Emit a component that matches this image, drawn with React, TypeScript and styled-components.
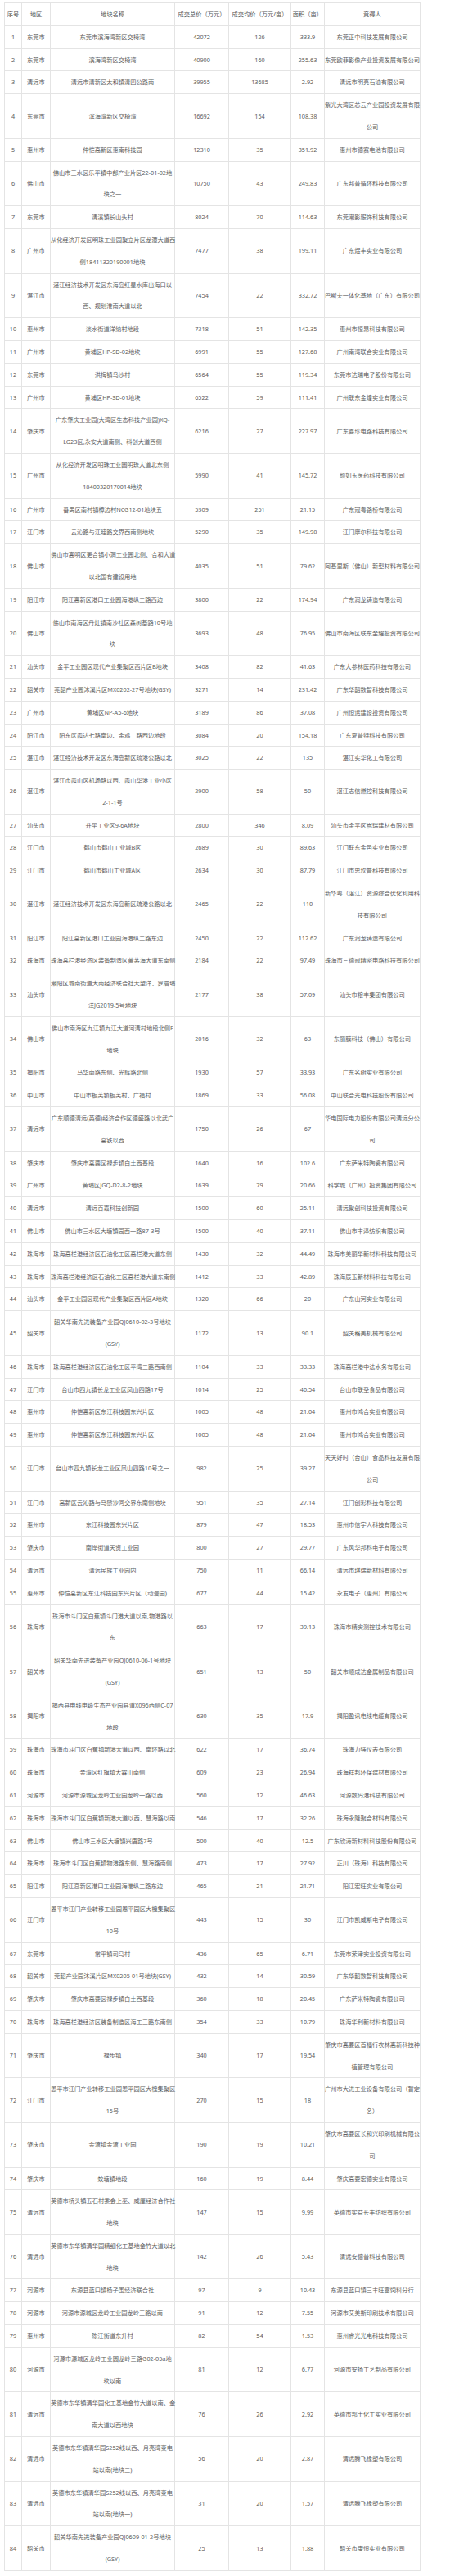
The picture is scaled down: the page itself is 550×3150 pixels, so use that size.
import React from "react";
import styled, { createGlobalStyle } from "styled-components";

const GlobalStyle = createGlobalStyle`
  html, body { margin: 0; padding: 0; background: #ffffff; }
  body { font-family: "Noto Sans CJK SC", "Noto Sans", sans-serif; }
`;

const Page = styled.div`
  padding: 3px 0 0 5px;
  width: 550px;
  box-sizing: border-box;
`;

const Table = styled.table`
  width: 508px;
  table-layout: fixed;
  border-collapse: collapse;
  color: #5c5c5c;
  font-family: "Noto Sans", "Noto Sans CJK SC", sans-serif;
  font-size: 7.25px;
`;

const Cell = styled.td`
  border: 1px solid #e4e4e4;
  padding: 0;
  line-height: 26.8px;
  text-align: center;
  vertical-align: middle;
  white-space: pre;
  overflow: visible;
`;

const HeadCell = styled(Cell).attrs({ as: "th" })`
  font-weight: normal;
  color: #555555;
`;

type Row = [string, string, string, string, string, string];

const rows: Row[] = [
  ["东莞市", "东莞市滨海湾新区交椅湾", "42072", "126", "333.9", "东莞正中科技发展有限公司"],
  ["东莞市", "滨海湾新区交椅湾", "40900", "160", "255.63", "东莞欧菲影像产业投资发展有限公司"],
  ["清远市", "清远市清新区太和镇清四公路南", "39955", "13685", "2.92", "清远市明亮石油有限公司"],
  ["东莞市", "滨海湾新区交椅湾", "16692", "154", "108.38", "紫光大湾区芯云产业园投资发展有限\n公司"],
  ["惠州市", "仲恺高新区惠南科技园", "12310", "35", "351.92", "惠州市德赛电池有限公司"],
  ["佛山市", "佛山市三水区乐平镇中部产业片区22-01-02地\n块之一", "10750", "43", "249.83", "广东邦普循环科技有限公司"],
  ["东莞市", "清溪镇长山头村", "8024", "70", "114.63", "东莞潮影服饰科技有限公司"],
  ["广州市", "从化经济开发区明珠工业园聚立片区龙潭大道西\n侧18411320190001地块", "7477", "38", "199.11", "广东煜丰实业有限公司"],
  ["湛江市", "湛江经济技术开发区东海岛红星水库出海口以\n西、规划港南大道以北", "7454", "22", "332.72", "巴斯夫一体化基地（广东）有限公司"],
  ["惠州市", "淡水街道洋纳村地段", "7318", "51", "142.35", "惠州市恒昂科技有限公司"],
  ["广州市", "黄埔区HP-SD-02地块", "6991", "55", "127.68", "广州南湾联合实业有限公司"],
  ["东莞市", "洪梅镇乌沙村", "6564", "55", "119.34", "东莞市达瑞电子股份有限公司"],
  ["广州市", "黄埔区HP-SD-01地块", "6522", "59", "111.41", "广州联东金煌实业有限公司"],
  ["肇庆市", "广东肇庆工业园(大湾区生态科技产业园)XQ-\nLG23区,永安大道南侧、科创大道西侧", "6216", "27", "227.97", "广东喜珍电路科技有限公司"],
  ["广州市", "从化经济开发区明珠工业园明珠大道北东侧\n18400320170014地块", "5990", "41", "145.72", "颜如玉医药科技有限公司"],
  ["广州市", "番禺区南村镇樟边村NCG12-01地块五", "5309", "251", "21.15", "广东冠粤路桥有限公司"],
  ["江门市", "云沁路与江睦路交界西南侧地块", "5290", "35", "149.98", "江门摩尔科技有限公司"],
  ["佛山市", "佛山市高明区更合镇小洞工业园北侧、合和大道\n以北国有建设用地", "4035", "51", "79.62", "阿基里斯（佛山）新型材料有限公司"],
  ["阳江市", "阳江高新区港口工业园海港纵二路西边", "3800", "22", "174.94", "广东润龙铸造有限公司"],
  ["佛山市", "佛山市南海区丹灶镇南沙社区森树基路10号地\n块", "3693", "48", "76.95", "佛山市南海区联东金耀投资有限公司"],
  ["汕头市", "金平工业园区现代产业集聚区西片区B地块", "3408", "82", "41.63", "广东大参林医药科技有限公司"],
  ["韶关市", "莞韶产业园沐溪片区MX0202-27号地块(GSY)", "3271", "14", "231.42", "广东华韶数智科技有限公司"],
  ["广州市", "黄埔区NP-A5-6地块", "3189", "86", "37.08", "广州恒运建设投资有限公司"],
  ["阳江市", "阳东区霞达七路南边、金鸡二路西边地段", "3084", "20", "154.18", "广东夏普特科技有限公司"],
  ["湛江市", "湛江经济技术开发区东海岛新区疏港公路以北", "3025", "22", "135", "湛江实华化工有限公司"],
  ["湛江市", "湛江市霞山区机场路以西、霞山华港工业小区\n2-1-1号", "2900", "58", "50", "湛江志信燃控科技有限公司"],
  ["汕头市", "升平工业区9-6A地块", "2800", "346", "8.09", "汕头市金平区嵩瑞建材有限公司"],
  ["江门市", "鹤山市鹤山工业城B区", "2689", "30", "89.63", "江门联东金邑实业有限公司"],
  ["江门市", "鹤山市鹤山工业城A区", "2634", "30", "87.79", "江门市思坎普科技有限公司"],
  ["湛江市", "湛江经济技术开发区东海岛新区疏港公路以北", "2465", "22", "110", "新华粤（湛江）资源综合优化利用科\n技有限公司"],
  ["阳江市", "阳江高新区港口工业园海港纵二路东边", "2450", "22", "112.62", "广东润龙铸造有限公司"],
  ["珠海市", "珠海高栏港经济区装备制造区黄茅海大道东南侧", "2184", "22", "97.49", "珠海市三德冠精密电路科技有限公司"],
  ["汕头市", "潮阳区城南街道大南经济联合社大望洋、罗厝埔\n洋JG2019-5号地块", "2177", "38", "57.09", "汕头市粮丰集团有限公司"],
  ["佛山市", "佛山市南海区九江镇九江大道河清村地段北侧F\n地块", "2016", "32", "63", "东丽膜科技（佛山）有限公司"],
  ["揭阳市", "马华南路东侧、光辉路北侧", "1930", "57", "33.93", "广东名树实业有限公司"],
  ["中山市", "中山市板芙镇板芙村、广福村", "1869", "33", "56.08", "中山联合光电科技股份有限公司"],
  ["清远市", "广东顺德清远(英德)经济合作区德盛路以北武广\n高铁以西", "1750", "26", "67", "华电国际电力股份有限公司清远分公\n司"],
  ["肇庆市", "肇庆市高要区禄步镇白土西基段", "1640", "16", "102.6", "广东萨米特陶瓷有限公司"],
  ["广州市", "黄埔区JGQ-D2-8-2地块", "1639", "79", "20.66", "科学城（广州）投资集团有限公司"],
  ["清远市", "清远百嘉科技创新园", "1500", "60", "25.11", "清远聚创科技投资有限公司"],
  ["佛山市", "佛山市三水区大塘镇园西一路87-3号", "1500", "40", "37.11", "佛山市丰泽纺织有限公司"],
  ["珠海市", "珠海高栏港经济区石油化工区高栏港大道东侧", "1430", "32", "44.49", "珠海市美丽华新材料科技有限公司"],
  ["珠海市", "珠海高栏港经济区石油化工区高栏港大道东南侧", "1412", "33", "42.89", "珠海辰玉新材料科技有限公司"],
  ["汕头市", "金平工业园区现代产业集聚区西片区A地块", "1320", "66", "20", "广东山河实业有限公司"],
  ["韶关市", "韶关华南先进装备产业园QJ0610-02-3号地块\n(GSY)", "1172", "13", "90.1", "韶关格美机械有限公司"],
  ["珠海市", "珠海高栏港经济区石油化工区平湾二路西南侧", "1104", "33", "33.33", "珠海高栏港中法水务有限公司"],
  ["江门市", "台山市四九镇长龙工业区凤山四路17号", "1014", "25", "40.54", "台山市联圣食品有限公司"],
  ["惠州市", "仲恺高新区东江科技园东兴片区", "1005", "48", "21.04", "惠州市鸿合实业有限公司"],
  ["惠州市", "仲恺高新区东江科技园东兴片区", "1005", "48", "21.04", "惠州市鸿合实业有限公司"],
  ["江门市", "台山市四九镇长龙工业区凤山四路10号之一", "982", "25", "39.27", "天天好时（台山）食品科技发展有限\n公司"],
  ["江门市", "高新区云沁路与马鬃沙河交界东南侧地块", "951", "35", "27.14", "江门创彩科技有限公司"],
  ["惠州市", "东江科技园东兴片区", "879", "47", "18.53", "惠州市信宇人科技有限公司"],
  ["肇庆市", "南岸街道天资工业园", "800", "27", "29.77", "广东风华邦科电子有限公司"],
  ["清远市", "清远民族工业园内", "750", "11", "66.14", "清远市琪瑞新材料有限公司"],
  ["惠州市", "仲恺高新区东江科技园东兴片区（动漫园)", "677", "44", "15.42", "永发电子（惠州）有限公司"],
  ["珠海市", "珠海市斗门区白蕉镇斗门港大道以南,物港路以\n东", "663", "17", "39.13", "珠海市精实测控技术有限公司"],
  ["韶关市", "韶关华南先进装备产业园QJ0610-06-1号地块\n(GSY)", "651", "13", "50", "韶关市顺成达金属制品有限公司"],
  ["揭阳市", "揭西县电线电缆生态产业园县道X096西侧C-07\n地段", "630", "35", "17.9", "揭阳盈讯电线电缆有限公司"],
  ["珠海市", "珠海市斗门区白蕉镇新港大道以西、南环路以北", "622", "17", "36.74", "珠海力强仪表有限公司"],
  ["珠海市", "金湾区红旗镇大霖山南侧", "609", "23", "26.94", "珠海祥邦环保建材有限公司"],
  ["河源市", "河源市源城区龙岭工业园龙岭一路以西", "560", "12", "46.63", "河源数码港科技有限公司"],
  ["珠海市", "珠海市斗门区白蕉镇新港大道以西、慧海路以南", "546", "17", "32.26", "珠海永隆聚合材料有限公司"],
  ["佛山市", "佛山市三水区大塘镇兴唐路7号", "500", "40", "12.5", "广东欣涛新材料科技股份有限公司"],
  ["珠海市", "珠海市斗门区白蕉镇物港路东侧、慧海路南侧", "473", "17", "27.92", "正川（珠海）科技有限公司"],
  ["阳江市", "阳江高新区港口工业园海港纵二路东边", "465", "21", "21.71", "阳江宏旺实业有限公司"],
  ["江门市", "恩平市江门产业转移工业园恩平园区大槐集聚区\n10号", "443", "15", "30", "江门市凯威斯电子有限公司"],
  ["东莞市", "常平镇司马村", "436", "65", "6.71", "东莞市荣津实业投资有限公司"],
  ["韶关市", "莞韶产业园沐溪片区MX0205-01号地块(GSY)", "432", "14", "30.59", "广东华韶数智科技有限公司"],
  ["肇庆市", "肇庆市高要区禄步镇白土西基段", "360", "18", "20.45", "广东萨米特陶瓷有限公司"],
  ["珠海市", "珠海高栏港经济区装备制造区海工三路东南侧", "354", "33", "10.79", "珠海华利新材料有限公司"],
  ["肇庆市", "禄步镇", "340", "17", "19.54", "肇庆市高要区首福行农林高新科技种\n植管理有限公司"],
  ["江门市", "恩平市江门产业转移工业园恩平园区大槐集聚区\n15号", "270", "15", "18", "广州市大进工业设备有限公司（暂定\n名）"],
  ["肇庆市", "金渡镇金渡工业园", "190", "19", "10.21", "肇庆市高要区长和兴印刷机械有限公\n司"],
  ["肇庆市", "蛟塘镇地段", "160", "19", "8.44", "肇庆高要宏德实业有限公司"],
  ["清远市", "英德市桥头镇五石村委会上巫、威厘经济合作社\n地块", "147", "15", "9.99", "英德市实益长丰纺织有限公司"],
  ["清远市", "英德市东华镇清华园精细化工基地金竹大道以北\n地块", "142", "26", "5.43", "清远安德普科技有限公司"],
  ["河源市", "东源县蓝口镇杨子围经济联合社", "97", "9", "10.43", "东源县蓝口镇三丰旺富饲料分行"],
  ["河源市", "河源市源城区龙岭工业园龙岭三路以南", "91", "12", "7.55", "河源市艾美斯印刷技术有限公司"],
  ["惠州市", "陈江街道东升村", "82", "54", "1.53", "惠州睿光光电科技有限公司"],
  ["河源市", "河源市源城区龙岭工业园龙岭三路G02-05a地\n块以南", "81", "12", "6.77", "河源市安扬工艺制品有限公司"],
  ["清远市", "英德市东华镇清华园化工基地金竹大道以南、金\n南大道以西地块", "76", "26", "2.92", "英德市邦士化工实业有限公司"],
  ["清远市", "英德市东华镇清华园S252线以西、月亮湾变电\n站以南(地块二)", "56", "20", "2.87", "清远腾飞橡塑有限公司"],
  ["清远市", "英德市东华镇清华园S252线以西、月亮湾变电\n站以南(地块一)", "31", "20", "1.57", "清远腾飞橡塑有限公司"],
  ["韶关市", "韶关华南先进装备产业园QJ0609-01-2号地块\n(GSY)", "25", "13", "1.88", "韶关市康恒实业有限公司"],
];

const headers = ["序号", "地区", "地块名称", "成交总价（万元）", "成交均价（万元/亩）", "面积（亩）", "竞得人"];
const widths = [21, 35, 152, 66, 76, 41, 117];

export default function App() {
  return (
    <>
      <GlobalStyle />
      <Page>
        <Table>
          <colgroup>
            {widths.map((w, i) => (
              <col key={i} style={{ width: w }} />
            ))}
          </colgroup>
          <thead>
            <tr>
              {headers.map((h) => (
                <HeadCell key={h}>{h}</HeadCell>
              ))}
            </tr>
          </thead>
          <tbody>
            {rows.map((r, i) => (
              <tr key={i}>
                <Cell>{i + 1}</Cell>
                {r.map((c, j) => (
                  <Cell key={j}>{c}</Cell>
                ))}
              </tr>
            ))}
          </tbody>
        </Table>
      </Page>
    </>
  );
}
